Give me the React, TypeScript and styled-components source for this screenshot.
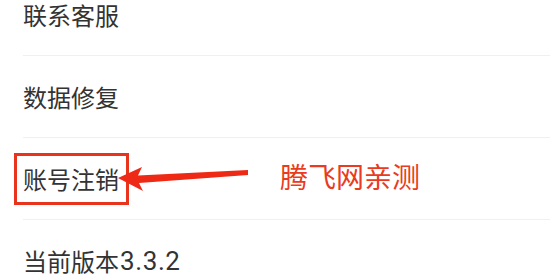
import styled, { createGlobalStyle } from 'styled-components';

const GlobalStyle = createGlobalStyle`
  html, body {
    margin: 0;
    padding: 0;
    background: #ffffff;
    overflow: hidden;
  }
  body {
    font-family: "Noto Sans CJK SC", "Noto Sans", sans-serif;
  }
`;

const Page = styled.div`
  position: relative;
  width: 550px;
  height: 275px;
  overflow: hidden;
  background: #ffffff;
`;

const List = styled.ul`
  list-style: none;
  margin: -26px 0 0 0;
  padding: 0 0 0 23px;
`;

const Row = styled.li`
  display: flex;
  align-items: center;
  height: 82px;
  border-bottom: 1px solid #f0f0f0;
  box-sizing: border-box;
  font-size: 24px;
  color: #333333;
  line-height: 26px;
`;

const Marked = styled.span`
  display: inline-flex;
  align-items: center;
  margin-left: -9px;
  padding: 10px 7px 10px 6px;
  border: 3px solid #e8341c;
`;

const Version = styled.span`
  font-family: "Roboto", "Noto Sans", sans-serif;
  font-size: 26px;
  letter-spacing: 0.6px;
  margin-left: 1px;
`;

const Arrow = styled.svg`
  position: absolute;
  left: 116px;
  top: 163px;
`;

const Note = styled.span`
  position: absolute;
  left: 280px;
  top: 159px;
  font-size: 28px;
  line-height: 34px;
  color: #ea3a22;
`;

const items = ['联系客服', '数据修复', '账号注销'];

export default function App() {
  return (
    <>
      <GlobalStyle />
      <Page>
        <List>
          {items.map((label) => (
            <Row key={label}>
              {label === '账号注销' ? <Marked>{label}</Marked> : label}
            </Row>
          ))}
          <Row>
            当前版本<Version>3.3.2</Version>
          </Row>
        </List>
        <Arrow width="134" height="32" viewBox="0 0 134 32">
          <path
            d="M2 15 L26 4 L22 12.5 L132 7 L132 12 L23 20 L27 28 Z"
            fill="#ee2a16"
          />
        </Arrow>
        <Note>腾飞网亲测</Note>
      </Page>
    </>
  );
}
